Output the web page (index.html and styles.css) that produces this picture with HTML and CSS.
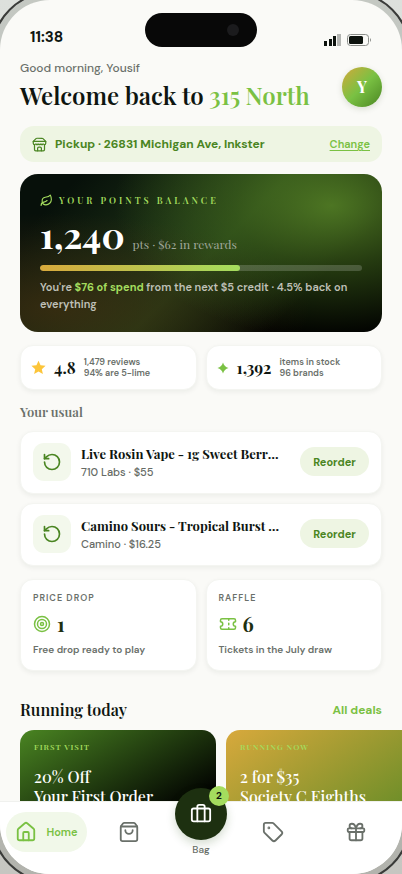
FILE: index.html
```html
<!DOCTYPE html>
<html lang="en">
<head>
<meta charset="utf-8">
<meta name="viewport" content="width=device-width, initial-scale=1">
<title>315 North</title>
<link rel="stylesheet" href="styles.css">
</head>
<body>
<div class="phone">
  <div class="status">
    <span class="time">11:38</span>
    <span class="island"><span class="camera"></span></span>
    <span class="signals">
      <svg width="17" height="12" viewBox="0 0 17 12" fill="#0c120d" aria-hidden="true"><rect x="0" y="7" width="3" height="5"/><rect x="5" y="5" width="3" height="7"/><rect x="9" y="2" width="3" height="10"/><rect x="13" y="0" width="4" height="12" fill="#b4b6b3"/></svg>
      <svg width="25" height="12" viewBox="0 0 25 12" aria-hidden="true"><rect x=".5" y=".5" width="21" height="11" rx="3" fill="none" stroke="#8b8e8a"/><rect x="2" y="2" width="14" height="8" rx="1.5" fill="#0c120d"/><path d="M23 4q2 2 0 4z" fill="#8b8e8a"/></svg>
    </span>
  </div>

  <main class="content">
    <header class="hello">
      <div>
        <p class="greeting">Good morning, Yousif</p>
        <h1>Welcome back to <span>315 North</span></h1>
      </div>
      <button class="avatar" type="button">Y</button>
    </header>

    <section class="pickup">
      <svg class="icon" width="16" height="16" viewBox="0 0 24 24"><path d="m2 7 4.4-4.4A2 2 0 0 1 7.8 2h8.4a2 2 0 0 1 1.4.6L22 7"/><path d="M4 12v8a2 2 0 0 0 2 2h12a2 2 0 0 0 2-2v-8"/><path d="M15 22v-4a2 2 0 0 0-2-2h-2a2 2 0 0 0-2 2v4"/><path d="M2 7h20v3a2 2 0 0 1-2 2 2.7 2.7 0 0 1-1.600-.6.7.7 0 0 0-.8 0 2.700 2.700 0 0 1-3.200 0 .7.7 0 0 0-.8 0 2.700 2.700 0 0 1-3.200 0 .7.7 0 0 0-.8 0 2.700 2.700 0 0 1-3.200 0 .7.7 0 0 0-.8 0A2.700 2.700 0 0 1 4 12a2 2 0 0 1-2-2z"/></svg>
      <span class="address">Pickup · 26831 Michigan Ave, Inkster</span>
      <a href="#">Change</a>
    </section>

    <section class="points">
      <p class="eyebrow">
        <svg class="icon" width="13" height="13" viewBox="0 0 24 24"><path d="M11 20A7 7 0 0 1 9.800 6.100C15.500 5 17 4.480 19 2c1 2 2 4.180 2 8 0 5.500-4.780 10-10 10Z"/><path d="M2 21c0-3 1.850-5.360 5.080-6C9.500 14.520 12 13 13 12"/></svg>
        YOUR POINTS BALANCE
      </p>
      <p class="balance"><strong>1,240</strong><span>pts · $62 in rewards</span></p>
      <div class="track"><div class="fill"></div></div>
      <p class="note">You're <b>$76 of spend</b> from the next $5 credit · 4.5% back on everything</p>
    </section>

    <section class="pair stats">
      <div class="card stat">
        <svg width="15" height="15" viewBox="0 0 24 24" fill="#fcc53a"><path d="M12 1l3.300 7.400 8 .8-6 5.400 1.700 7.900-7-4.100-7 4.100 1.700-7.900-6-5.400 8-.8z"/></svg>
        <strong>4.8</strong>
        <span>1,479 reviews<br>94% are 5-lime</span>
      </div>
      <div class="card stat">
        <svg width="12" height="12" viewBox="0 0 24 24" fill="#7ac143"><path d="M12 1q2.500 8.500 11 11-8.500 2.500-11 11-2.500-8.500-11-11 8.500-2.500 11-11z"/></svg>
        <strong>1,392</strong>
        <span>items in stock<br>96 brands</span>
      </div>
    </section>

    <section class="usual">
      <h2>Your usual</h2>
      <article class="card item">
        <span class="tile"><svg class="icon" width="20" height="20" viewBox="0 0 24 24"><path d="M3 12a9 9 0 1 0 9-9 9.750 9.750 0 0 0-6.740 2.740L3 8"/><path d="M3 3v5h5"/></svg></span>
        <div class="info"><h3>Live Rosin Vape - 1g Sweet Berry Gelato</h3><p>710 Labs · $55</p></div>
        <button type="button">Reorder</button>
      </article>
      <article class="card item">
        <span class="tile"><svg class="icon" width="20" height="20" viewBox="0 0 24 24"><path d="M3 12a9 9 0 1 0 9-9 9.750 9.750 0 0 0-6.740 2.740L3 8"/><path d="M3 3v5h5"/></svg></span>
        <div class="info"><h3>Camino Sours - Tropical Burst Gummies</h3><p>Camino · $16.25</p></div>
        <button type="button">Reorder</button>
      </article>
    </section>

    <section class="pair">
      <div class="card perk">
        <h4>PRICE DROP</h4>
        <p class="count"><svg class="icon" width="18" height="18" viewBox="0 0 24 24"><circle cx="12" cy="12" r="10"/><circle cx="12" cy="12" r="6"/><circle cx="12" cy="12" r="2"/></svg><strong>1</strong></p>
        <p class="hint">Free drop ready to play</p>
      </div>
      <div class="card perk">
        <h4>RAFFLE</h4>
        <p class="count"><svg class="icon" width="18" height="18" viewBox="0 0 24 24"><path d="M2 9a3 3 0 0 1 0 6v2a2 2 0 0 0 2 2h16a2 2 0 0 0 2-2v-2a3 3 0 0 1 0-6V7a2 2 0 0 0-2-2H4a2 2 0 0 0-2 2Z"/><path d="M13 5v2M13 17v2M13 11v2"/></svg><strong>6</strong></p>
        <p class="hint">Tickets in the July draw</p>
      </div>
    </section>

    <section class="deals">
      <div class="deals-head"><h2>Running today</h2><a href="#">All deals</a></div>
      <div class="rail">
        <article class="deal forest"><p>FIRST VISIT</p><h3>20% Off<br>Your First Order</h3></article>
        <article class="deal gold"><p>RUNNING NOW</p><h3>2 for $35<br>Society C Eighths</h3></article>
      </div>
    </section>
  </main>

  <nav class="tabs" aria-label="Main">
    <a class="tab active" href="#"><svg class="icon" width="22" height="22" viewBox="0 0 24 24"><path d="M15 21v-8a1 1 0 0 0-1-1h-4a1 1 0 0 0-1 1v8"/><path d="M3 10a2 2 0 0 1 .709-1.528l7-6a2 2 0 0 1 2.582 0l7 6A2 2 0 0 1 21 10v9a2 2 0 0 1-2 2H5a2 2 0 0 1-2-2z"/></svg>Home</a>
    <a class="tab" href="#" aria-label="Shop"><svg class="icon" width="22" height="22" viewBox="0 0 24 24"><path d="M16 10a4 4 0 0 1-8 0"/><path d="M3.100 6h17.800"/><path d="M3.400 5.500A2 2 0 0 0 3 6.700V20a2 2 0 0 0 2 2h14a2 2 0 0 0 2-2V6.700a2 2 0 0 0-.4-1.200l-2-2.700A2 2 0 0 0 17 2H7a2 2 0 0 0-1.600.8z"/></svg></a>
    <a class="tab bag" href="#">
      <span class="bubble"><svg class="icon" width="22" height="22" viewBox="0 0 24 24"><path d="M16 20V4a2 2 0 0 0-2-2h-4a2 2 0 0 0-2 2v16"/><rect x="2" y="6" width="20" height="14" rx="2"/></svg><span class="badge">2</span></span>
      Bag
    </a>
    <a class="tab" href="#" aria-label="Deals"><svg class="icon" width="22" height="22" viewBox="0 0 24 24"><path d="M12.586 2.586A2 2 0 0 0 11.172 2H4a2 2 0 0 0-2 2v7.172a2 2 0 0 0 .586 1.414l8.704 8.704a2.426 2.426 0 0 0 3.420 0l6.580-6.580a2.426 2.426 0 0 0 0-3.420z"/><circle cx="7.500" cy="7.500" r=".5"/></svg></a>
    <a class="tab" href="#" aria-label="Rewards"><svg class="icon" width="22" height="22" viewBox="0 0 24 24"><rect x="3" y="8" width="18" height="4" rx="1"/><path d="M12 8v13"/><path d="M19 12v7a2 2 0 0 1-2 2H7a2 2 0 0 1-2-2v-7"/><path d="M7.500 8a2.500 2.500 0 0 1 0-5A4.800 8 0 0 1 12 8a4.800 8 0 0 1 4.500-5 2.500 2.500 0 0 1 0 5"/></svg></a>
  </nav>
</div>
</body>
</html>
```

FILE: styles.css
```css
:root {
  --serif: "Playfair Display", "Liberation Serif", serif;
  --sans: "DM Sans", "Inter", sans-serif;
  --lime: #7ac143;
  --leaf: #4a8522;
  --mint: #eef5e3;
  --bright: #a4dc5e;
  --ink: #0e1510;
  --muted: #6a706a;
}

* { box-sizing: border-box; }

h1, h2, h3, h4, p { margin: 0; }

body {
  margin: 0;
  font-family: var(--sans);
  color: var(--ink);
  background: linear-gradient(#dde0dc, #c6c6c1);
}

a { color: var(--lime); }

button { border: 0; padding: 0; font-family: var(--sans); cursor: pointer; }

.icon {
  flex: none;
  fill: none;
  stroke: currentColor;
  stroke-width: 2;
  stroke-linecap: round;
  stroke-linejoin: round;
}

.phone {
  display: flex;
  flex-direction: column;
  height: 100vh;
  overflow: hidden;
  border-radius: 50px;
  background: #fafaf7;
  box-shadow: 0 0 0 6px rgba(110, 114, 106, .22);
  outline: 2px solid #3a3b39;
  outline-offset: 6px;
}

.status {
  flex: none;
  display: grid;
  grid-template-columns: 1fr 112px 1fr;
  align-items: center;
  height: 60px;
  padding: 0 30px;
}

.time { padding-top: 14px; font-size: 15px; font-weight: 700; }

.island {
  display: flex;
  align-items: center;
  justify-content: flex-end;
  height: 34px;
  padding-right: 18px;
  border-radius: 17px;
  background: #080808;
}

.camera { width: 12px; height: 12px; border-radius: 50%; background: #1b1b1d; }

.signals { display: flex; justify-content: flex-end; gap: 6px; padding-top: 20px; }

.content {
  flex: 1;
  min-height: 0;
  overflow: hidden;
  padding: 0 20px;
}

.hello { display: flex; justify-content: space-between; align-items: center; height: 54px; }

.greeting { font-size: 12px; line-height: 16px; font-weight: 500; color: var(--muted); }

h1 { font: 600 24px/38px var(--serif); white-space: nowrap; }

h1 span { color: var(--lime); }

.avatar {
  flex: none;
  width: 40px;
  height: 40px;
  border-radius: 50%;
  background: linear-gradient(135deg, #d4a93a, var(--lime) 50%, var(--leaf));
  box-shadow: 0 2px 6px rgba(40, 70, 20, .15);
  color: #fff;
  font: 700 16px/40px var(--serif);
}

.pickup {
  display: flex;
  align-items: center;
  gap: 8px;
  height: 36px;
  margin-top: 12px;
  padding: 0 12px;
  border-radius: 14px;
  background: var(--mint);
  color: var(--leaf);
}

.pickup .icon { width: 15px; height: 15px; }

.address { flex: 1; font-size: 12px; font-weight: 700; white-space: nowrap; }

.pickup a { font-size: 11px; font-weight: 600; text-underline-offset: 2px; }

.points {
  height: 158px;
  margin-top: 12px;
  padding: 18px 20px;
  border-radius: 18px;
  background:
    radial-gradient(ellipse 60% 84% at 86% 20%, rgba(80, 122, 36, .95), rgba(68, 108, 30, .55) 45%, transparent),
    radial-gradient(ellipse 70% 60% at 10% 85%, rgba(66, 46, 16, .7), transparent),
    linear-gradient(135deg, #07100a 12%, #1c3115 42%, #213a16 52%, #000 78%);
  color: #fff;
}

.eyebrow {
  display: flex;
  align-items: center;
  gap: 6px;
  font: 600 9px/16px var(--serif);
  letter-spacing: 3px;
  color: var(--bright);
}

.balance { display: flex; align-items: baseline; gap: 8px; height: 44px; margin-top: 4px; }

.balance strong { font: 700 36px/44px var(--serif); }

.balance span { font: 400 12px/20px var(--serif); color: #a0a89b; }

.track { height: 6px; margin-top: 9px; border-radius: 3px; background: rgba(255, 255, 255, .18); overflow: hidden; }

.fill { width: 62%; height: 100%; border-radius: 3px; background: linear-gradient(90deg, #d8a93c, var(--bright)); }

.note { margin-top: 8px; font-size: 11px; line-height: 17px; font-weight: 600; color: #bfc0b7; }

.note b { font-weight: 700; color: var(--bright); }

.pair { display: grid; grid-template-columns: 1fr 1fr; gap: 9px; margin-top: 13px; }

.card { border: 1px solid #f4f5f1; border-radius: 13px; background: #fff; box-shadow: 0 2px 5px rgba(20, 30, 20, .06); }

.stat { display: flex; align-items: center; gap: 8px; height: 45px; padding: 0 10px; }

.stat strong { font: 700 16px/24px var(--serif); }

.stat span { font-size: 9px; line-height: 11px; font-weight: 600; color: var(--muted); }

.usual { display: grid; grid-template-columns: minmax(0, 1fr); gap: 9px; margin-top: 12px; }

.usual h2 { font: 600 13px/20px var(--serif); color: var(--muted); }

.item { display: flex; align-items: center; height: 63px; padding: 0 12px 2px; }

.tile {
  display: grid;
  flex: none;
  place-items: center;
  width: 38px;
  height: 38px;
  border-radius: 11px;
  background: #f3f8ec;
  color: var(--leaf);
}

.info { flex: 1; min-width: 0; margin: 0 18px 0 10px; }

.info h3 { font: 700 13px/20px var(--serif); white-space: nowrap; overflow: hidden; text-overflow: ellipsis; }

.info p { font-size: 11px; line-height: 16px; font-weight: 500; color: #666b66; }

.item button {
  width: 69px;
  height: 29px;
  border-radius: 15px;
  background: var(--mint);
  color: var(--leaf);
  font-size: 11px;
  font-weight: 700;
}

.perk { height: 92px; padding: 12px; }

.perk h4 { font-size: 9px; line-height: 13px; font-weight: 600; letter-spacing: 1px; color: var(--muted); }

.count { display: flex; align-items: center; gap: 6px; margin: 7px 0; color: var(--lime); }

.count strong { font: 700 20px/24px var(--serif); color: #1d3010; }

.hint { font-size: 10px; line-height: 14px; font-weight: 600; color: var(--muted); }

.deals { margin-top: 25px; }

.deals-head { display: flex; align-items: center; justify-content: space-between; height: 28px; }

.deals-head h2 { font: 600 16px/28px var(--serif); }

.deals-head a { font-size: 12px; font-weight: 700; text-decoration: none; }

.rail { display: flex; gap: 10px; margin: 6px -20px 0 0; overflow: hidden; }

.deal { flex: none; width: 196px; height: 130px; padding: 10px 14px; border-radius: 14px; color: #fff; }

.deal p { font: 600 8px/13px var(--serif); letter-spacing: 1px; color: var(--bright); }

.deal h3 { margin-top: 14px; font: 500 16px/20px var(--serif); white-space: nowrap; }

.forest { background: linear-gradient(150deg, #4a8522, #000 72%); }

.gold { background: linear-gradient(145deg, #d8a93c, #4a8522); }

.tabs {
  position: relative;
  flex: none;
  display: grid;
  grid-template-columns: 93px 1fr 72px 1fr 93px;
  height: 73px;
  background: #fff;
  box-shadow: inset 0 1px 0 #f0f1ee;
}

.tab {
  display: flex;
  align-items: center;
  justify-content: center;
  height: 40px;
  margin-top: 11px;
  color: var(--muted);
  font-size: 11px;
  font-weight: 600;
  text-decoration: none;
}

.active { gap: 9px; margin-left: 6px; margin-right: 6px; border-radius: 20px; background: #f1f8e9; color: var(--lime); }

.bag { flex-direction: column; height: auto; margin-top: -13px; justify-content: flex-start; font-size: 10px; line-height: 20px; font-weight: 500; }

.bubble {
  position: relative;
  display: grid;
  place-items: center;
  width: 52px;
  height: 52px;
  border-radius: 50%;
  background: #1d3010;
  box-shadow: 0 4px 10px rgba(40, 80, 20, .2);
  color: #fff;
}

.badge {
  position: absolute;
  top: -2px;
  right: -2px;
  width: 20px;
  height: 20px;
  border-radius: 50%;
  background: var(--bright);
  color: var(--ink);
  font-size: 10px;
  line-height: 20px;
  font-weight: 700;
  text-align: center;
}
```
